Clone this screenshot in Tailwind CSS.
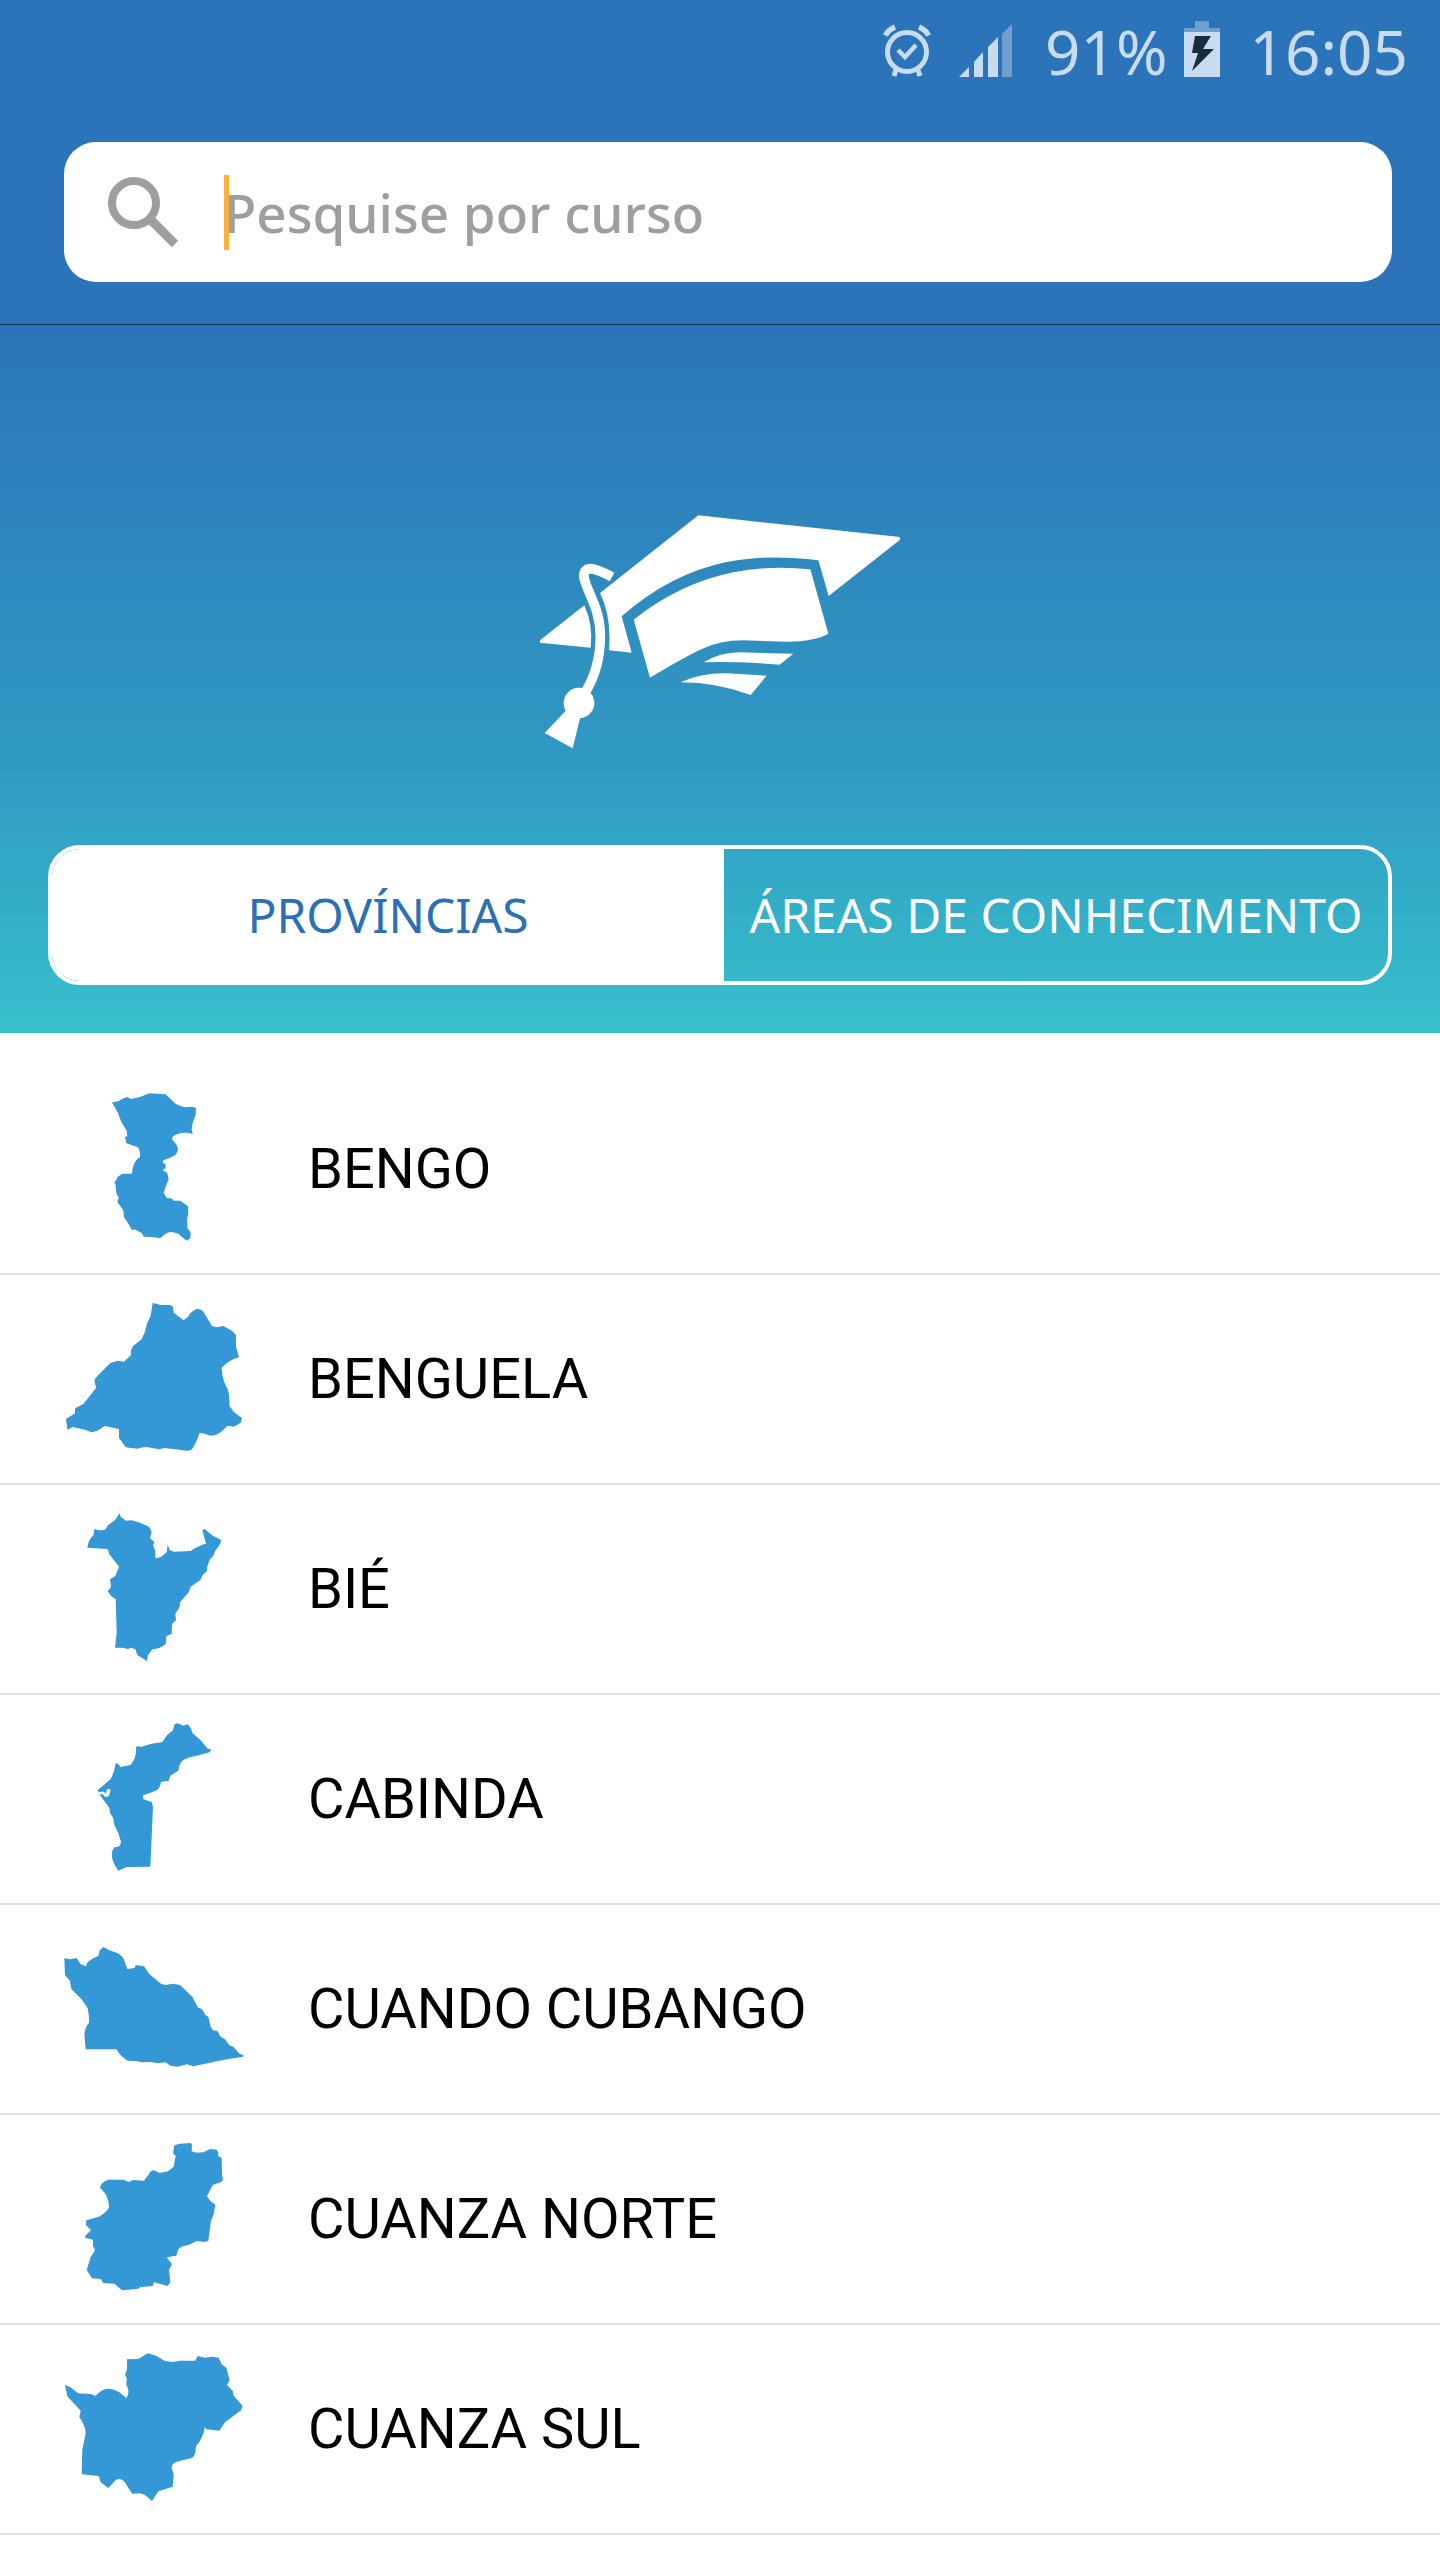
<!DOCTYPE html>
<html lang="pt">

<head>
    <meta charset="UTF-8">
    <meta name="viewport" content="width=device-width, initial-scale=1.0">
    <title>Cursos</title>
    <script src="https://cdn.jsdelivr.net/npm/@tailwindcss/browser@4"></script>
</head>

<body class="bg-white font-['Noto_Sans',sans-serif]">
    <header class="bg-[#2b74b9] border-b border-[#12304d]">
        <!-- status bar -->
        <div class="flex items-center justify-end h-[102px] pr-8 text-[#c9dcef] text-[62px] leading-none">
            <svg class="w-[48px] h-[54px] mr-7" viewBox="0 0 48 54" fill="none" stroke="currentColor">
                <ellipse cx="24" cy="28" rx="19.5" ry="19.5" stroke-width="5" />
                <path d="M2.500 11.500Q5 6 12 3M45.500 11.500Q43 6 36 3" stroke-width="5.500" />
                <path d="M15 26l7 7 11-12" stroke-width="4.500" />
                <path d="M13 46l-2 6M35 46l2 6" stroke-width="5" />
            </svg>
            <svg class="w-[54px] h-[54px] mr-8" viewBox="0 0 54 54" fill="currentColor">
                <path d="M0 53L10 43V53zM15 38L24 28V53H15zM29 23L39 13V53H29z" />
                <path d="M43 10L53 0V53H43z" class="text-[#6e9fd0]" />
            </svg>
            <span>91%</span>
            <svg class="w-[36px] h-[56px] ml-4 mr-[30px] mb-1" viewBox="0 0 36 56">
                <path d="M11 0H25V7H36V11H0V7H11z" fill="#6e9fd0" />
                <path d="M0 11H36V56H0z" fill="#c9dcef" />
                <path d="M11 15H27L19 28H30L8 50L14 32H8z" fill="#172c3f" />
            </svg>
            <span>16:05</span>
        </div>
        <!-- search -->
        <form class="pt-10 pb-[42px] pl-16 pr-12">
            <div class="flex items-center h-[140px] bg-white rounded-[32px] pl-11">
                <svg class="w-[70px] h-[70px] mr-[46px]" viewBox="0 0 70 70" fill="none" stroke="#9e9e9e">
                    <circle cx="26" cy="26" r="22" stroke-width="8" />
                    <path d="M44 44L67 67" stroke-width="9" />
                    <path d="M41 41L46 46" stroke-width="5" />
                </svg>
                <div class="relative flex-1">
                    <span class="absolute left-0 inset-y-0 w-[5px] bg-[#ffb03b]"></span>
                    <input type="text" aria-label="Pesquise por curso" placeholder="Pesquise por curso"
                        class="block w-full h-[75px] text-[53px] leading-[75px] font-medium text-black placeholder:text-[#9e9e9e] outline-none">
                </div>
            </div>
        </form>
    </header>

    <section class="bg-linear-to-b/srgb from-[#2b74b9] via-[#309ac3] via-62% to-[#37c0cb] pt-[190px] pb-12 pl-12 pr-12">
        <svg class="block mx-auto w-[360px] h-[234px]" viewBox="60 47 1080 700" fill="white">
            <path d="M535 47L1140 112V120L926 289L895 182Q740 163 620 187Q450 222 305 350L335 459L267 452Q275 350 240 280z" />
            <path d="M193 317Q220 375 212 444L60 429V422z" />
            <path d="M341 360Q480 250 640 218Q750 196 871 209L925 402Q885 425 800 426L670 422Q600 422 540 450Q470 485 390 534z" />
            <path d="M551 488Q600 458 660 458L820 462L779 495Q650 485 551 488z" />
            <path d="M482 548Q540 520 620 521L740 528L692 586Q590 548 482 548z" />
            <path d="M276 232C240 212 225 207 207 207C192 209 188 225 195 245C205 282 241 330 241 410C241 480 225 530 196 578" fill="none" stroke="white" stroke-width="29" />
            <circle cx="177" cy="610" r="46" />
            <path d="M140 630L74 700L158 746L182 648z" />
        </svg>
        <div class="mt-24 flex h-[140px] border-4 border-white rounded-[32px] overflow-hidden text-[48px]">
            <button type="button" class="w-[672px] bg-white text-[#2b6fb5]">PROVÍNCIAS</button>
            <button type="button" class="flex-1 text-white whitespace-nowrap">ÁREAS DE CONHECIMENTO</button>
        </div>
    </section>

    <main class="pt-8 font-[Roboto,sans-serif] text-[56px] text-black">
        <a href="#" class="flex items-center h-[210px] pl-16 border-b-2 border-[#e0e0e0]">
            <svg class="w-[180px] h-[148px] mr-16 mb-1" viewBox="42 39 540 444" fill="#3498d6">
                <path d="M186 67L205 64L216 57L231 51L243 57L270 51L298 40L347 43L375 70Q393 82 410 82Q425 78 438 84L437 105L428 128L425 146L428 162Q405 155 383 162Q365 168 366 178L378 192Q386 204 383 214Q378 228 360 233L340 241L338 247L347 254L347 264L338 271L352 279L356 299L350 311L341 338L350 353L367 356L371 362H391L414 379L415 402L411 417L413 446L422 457L421 474L412 482L403 477L385 461Q360 451 347 461L330 475L305 471L281 470L276 460L254 448L246 451L237 434L222 411L220 391L202 366L206 354L198 337L197 315L193 308L205 289L218 281H246Q247 245 270 231Q272 215 264 202L229 190L225 171L232 169L230 152L214 126L203 97z" />
            </svg>
            BENGO
        </a>
        <a href="#" class="flex items-center h-[210px] pl-16 border-b-2 border-[#e0e0e0]">
            <svg class="w-[180px] h-[148px] mr-16 mb-1" viewBox="42 39 540 444" fill="#3498d6">
                <path d="M308 39L334 45H360L369 50L371 68L401 91L414 80Q425 62 440 57Q453 55 460 65L486 108L500 112L520 108L547 123L558 136V170L567 202Q540 208 515 233Q516 265 530 292Q540 310 538 347L552 367L576 384L572 398L552 410L533 407L510 428Q494 438 482 437Q462 430 449 428L442 447Q430 476 422 481Q410 484 390 479L342 474L328 478L285 470L263 476L227 472L207 443V417L164 408L140 423L125 427L105 419L68 411L52 419L48 387L75 370V355L100 342L138 294L133 269L145 255L180 220L203 212L222 215L243 195Q241 175 252 166L275 148Q287 125 292 98L302 77z" />
            </svg>
            BENGUELA
        </a>
        <a href="#" class="flex items-center h-[210px] pl-16 border-b-2 border-[#e0e0e0]">
            <svg class="w-[180px] h-[148px] mr-16 mb-1" viewBox="42 39 540 444" fill="#3498d6">
                <path d="M209 39L212 50L228 62L245 61L270 68L285 75L297 80L305 96L300 114L313 126L309 136L315 150L316 174Q328 178 350 157L353 134L359 150L372 155L422 153Q445 136 468 131L457 90L464 87L485 105L513 120L511 131L495 154L490 168L480 177L471 202V212L456 228L452 239L422 260L416 277L390 307L389 321L376 341L378 361L366 372L365 402L349 408L347 432Q330 447 307 448L294 466L291 483L262 465L256 448L243 443L234 447L217 443H195L200 397L197 297L184 289L173 274L183 261L180 238L196 228L207 200L178 163L173 147L135 145L112 143Q115 120 130 106L134 86L146 91L165 90L174 76L195 60z" />
            </svg>
            BIÉ
        </a>
        <a href="#" class="flex items-center h-[210px] pl-16 border-b-2 border-[#e0e0e0]">
            <svg class="w-[180px] h-[148px] mr-16 mb-1" viewBox="42 39 540 444" fill="#3498d6">
                <path d="M374 43L383 40L400 47L413 43L422 54L428 70L452 91L474 117H483L479 127L440 137Q410 143 400 150Q388 158 385 182L361 197L356 212L333 216Q330 235 320 241Q300 250 279 256V267L305 276L309 290L301 470L230 471L205 482Q189 460 186 442Q184 422 193 412Q213 412 213 395L205 370L192 342L190 325L180 309L178 293L148 253H159Q162 261 169 262L177 257L182 239Q176 235 171 237L168 251Q160 241 151 247L141 242L183 206Q192 188 197 161Q203 157 211 171L242 165Q260 143 258 112L263 108L272 111Q305 99 337 96L352 74L368 62z" />
            </svg>
            CABINDA
        </a>
        <a href="#" class="flex items-center h-[210px] pl-16 border-b-2 border-[#e0e0e0]">
            <svg class="w-[180px] h-[148px] mr-16 mb-1" viewBox="42 39 540 444" fill="#3498d6">
                <path d="M43 115L61 118L80 114L91 132L108 139L113 126L127 116L145 108L149 91L161 81L178 91L202 99Q220 108 224 125L232 147L254 144L257 135L282 139L297 161L333 191L346 195L369 191L390 195L427 230L444 263L455 266L466 284L475 291L482 320L489 331L502 333L512 350L525 358L538 376L550 380L568 401L580 405V410L530 418L430 439L411 433L383 440L361 437L347 427L323 430L300 426L275 427L259 423L233 422Q214 412 199 388H107L103 340Q107 319 117 308V290L113 265L96 239L64 207L60 183L45 165z" />
            </svg>
            CUANDO CUBANGO
        </a>
        <a href="#" class="flex items-center h-[210px] pl-16 border-b-2 border-[#e0e0e0]">
            <svg class="w-[180px] h-[148px] mr-16 mb-1" viewBox="42 39 540 444" fill="#3498d6">
                <path d="M373 46L390 41L421 39L426 43L425 64L440 68L460 67L480 57L500 59L506 68L504 77L515 84L516 132L519 151L512 157L488 165L471 199L481 213L496 224L491 253L483 272L475 333L462 336L440 333L421 343L394 350L385 358L379 377L350 382L366 403L357 420L361 457L353 468L312 457L308 468L272 471L262 477L216 481L193 461L160 459L152 447L126 445L110 420L122 382L135 360L129 348V329L105 323L107 316L123 301L108 285L109 271L147 260Q170 248 177 232Q176 207 165 190L150 173Q151 158 174 149L221 149L236 156L249 150L282 152L295 135Q302 120 312 121L329 129L354 124L371 110L377 77L369 70z" />
            </svg>
            CUANZA NORTE
        </a>
        <a href="#" class="flex items-center h-[210px] pl-16 border-b-2 border-[#e0e0e0]">
            <svg class="w-[180px] h-[148px] mr-16 mb-1" viewBox="42 39 540 444" fill="#3498d6">
                <path d="M45 135L60 141L85 160L123 162L136 168L153 153Q180 138 208 157L229 174Q242 155 229 135L230 115L225 104L231 90V58L265 57L293 40L318 47L345 63L368 66L391 62H436L443 48L464 53L485 50L506 53L516 74L529 83L539 121L531 135L549 154L551 167L578 198L573 211L525 247L508 272L470 268L464 262Q460 295 438 318Q437 350 425 354L385 364Q363 370 365 384L371 403L368 440L325 454L306 483L285 465L271 460L247 461L222 424Q210 413 197 420L175 444L152 427L146 408L95 403L97 330L107 280Q107 260 88 231L92 212L52 169z" />
            </svg>
            CUANZA SUL
        </a>
    </main>
</body>

</html>
